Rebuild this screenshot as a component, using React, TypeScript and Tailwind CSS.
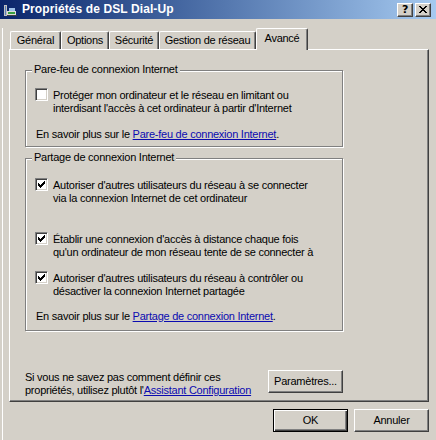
import React from "react";

const raised =
  "border border-t-white border-l-white border-r-[#404040] border-b-[#404040] shadow-[inset_-1px_-1px_0_#808080]";

function Check({ checked }: { checked?: boolean }) {
  return (
    <div className="w-[13px] h-[13px] shrink-0 bg-white border border-t-[#808080] border-l-[#808080] border-r-white border-b-white shadow-[inset_1px_1px_0_#404040,inset_-1px_-1px_0_#d4d0c8] relative">
      {checked && (
        <svg width="7" height="7" viewBox="0 0 7 7" className="absolute left-[2px] top-[2px]" shapeRendering="crispEdges">
          <path d="M0 2h1v3H0zM1 3h1v3H1zM2 4h1v3H2zM3 3h1v3H3zM4 2h1v3H4zM5 1h1v3H5zM6 0h1v3H6z" fill="#000" />
        </svg>
      )}
    </div>
  );
}

function Option({ checked, lines, className = "" }: { checked?: boolean; lines: string[]; className?: string }) {
  return (
    <div className={"flex items-start " + className}>
      <Check checked={checked} />
      <div className="ml-[5px] pt-[1px]">
        {lines.map((l) => (
          <div key={l} className="whitespace-nowrap">{l}</div>
        ))}
      </div>
    </div>
  );
}

function Group({ title, className = "", children }: { title: string; className?: string; children: React.ReactNode }) {
  return (
    <div
      className={
        "relative w-[318px] border border-[#808080] shadow-[inset_1px_1px_0_white,1px_1px_0_white] pl-[9px] " + className
      }
    >
      <div className="absolute left-[6px] -top-[8px] px-[2px] bg-[#d4d0c8] whitespace-nowrap">{title}</div>
      {children}
    </div>
  );
}

function Link({ children }: { children: React.ReactNode }) {
  return <span className="text-[#0b0bb0] underline">{children}</span>;
}

const tabs = [
  { label: "Général", w: "w-[51px]" },
  { label: "Options", w: "w-[48px]" },
  { label: "Sécurité", w: "w-[50px]" },
  { label: "Gestion de réseau", w: "w-[97px]" },
];

export default function App() {
  return (
    <div className="w-[436px] h-[440px] overflow-hidden bg-[#d4d0c8] text-[11px] leading-[13px] tracking-[-0.25px] text-black font-['Liberation_Sans',Arial,sans-serif]">
      {/* title bar */}
      <div className="h-[19px] flex items-center bg-linear-to-r from-[#0a246a] to-[#a6caf0] pl-[3px] pr-[5px]">
        <svg width="16" height="16" viewBox="0 0 16 16" shapeRendering="crispEdges">
          <rect x="1" y="3" width="3" height="11" fill="#c0c0c0" />
          <rect x="2" y="4" width="1" height="9" fill="#5a7fb8" />
          <path d="M4 9h9v4H4z" fill="#dcdcdc" />
          <path d="M5 10h7v2H5z" fill="#3aa040" />
          <path d="M4 13h10v1H4z" fill="#404040" />
          <path d="M6 6h6v3H6z" fill="#9dc0e8" />
        </svg>
        <span className="ml-[3px] text-white font-bold text-[12px] tracking-[0.1px]">Propriétés de DSL Dial-Up</span>
        <div className="ml-auto flex gap-[2px]">
          <div className={"w-[16px] h-[14px] bg-[#d4d0c8] flex items-center justify-center " + raised}>
            <span className="font-bold text-[11px] leading-none font-['DejaVu_Sans',sans-serif] -mt-[1px]">?</span>
          </div>
          <div className={"w-[16px] h-[14px] bg-[#d4d0c8] flex items-center justify-center " + raised}>
            <svg width="8" height="7" viewBox="0 0 8 7" shapeRendering="crispEdges">
              <path d="M0 0h2v1H0zM6 0h2v1H6zM1 1h2v1H1zM5 1h2v1H5zM2 2h4v1H2zM3 3h2v1H3zM2 4h4v1H2zM1 5h2v1H1zM5 5h2v1H5zM0 6h2v1H0zM6 6h2v1H6z" fill="#000" />
            </svg>
          </div>
        </div>
      </div>

      <div className="ml-[2px] border-l border-white pl-[6px] h-[421px]">
        {/* tabs */}
        <div className="flex items-end h-[21px] mt-[9px] pl-[1px]">
          {tabs.map((t) => (
            <div
              key={t.label}
              className={
                t.w +
                " h-[18px] flex items-center justify-center rounded-t-[2px] border-t border-l border-r border-t-white border-l-white border-r-[#404040] shadow-[inset_-1px_0_0_#808080] whitespace-nowrap"
              }
            >
              {t.label}
            </div>
          ))}
          <div className="w-[52px] h-[22px] -mb-[1px] relative z-10 bg-[#d4d0c8] flex items-start justify-center pt-[3px] rounded-t-[2px] border-t border-l border-r border-t-white border-l-white border-r-[#404040] shadow-[inset_-1px_0_0_#808080]">
            Avancé
          </div>
        </div>

        {/* panel */}
        <div className="w-[420px] h-[353px] border border-t-white border-l-white border-r-[#404040] border-b-[#404040] shadow-[inset_-1px_-1px_0_#808080] pl-[15px] pt-[20px]">
          <Group title="Pare-feu de connexion Internet" className="pt-[17px] pb-[5px]">
            <Option
              lines={[
                "Protéger mon ordinateur et le réseau en limitant ou",
                "interdisant l'accès à cet ordinateur à partir d'Internet",
              ]}
            />
            <div className="mt-[13px] ml-[1px] whitespace-nowrap">
              En savoir plus sur le <Link>Pare-feu de connexion Internet</Link>.
            </div>
          </Group>

          <Group title="Partage de connexion Internet" className="mt-[11px] pt-[19px] pb-[7px]">
            <Option
              checked
              lines={[
                "Autoriser d'autres utilisateurs du réseau à se connecter",
                "via la connexion Internet de cet ordinateur",
              ]}
            />
            <Option
              checked
              className="mt-[27px]"
              lines={[
                "Établir une connexion d'accès à distance chaque fois",
                "qu'un ordinateur de mon réseau tente de se connecter à",
              ]}
            />
            <Option
              checked
              className="mt-[12px]"
              lines={[
                "Autoriser d'autres utilisateurs du réseau à contrôler ou",
                "désactiver la connexion Internet partagée",
              ]}
            />
            <div className="mt-[12px] ml-[1px] whitespace-nowrap">
              En savoir plus sur le <Link>Partage de connexion Internet</Link>.
            </div>
          </Group>

          <div className="w-[318px] mt-[39px] flex items-start justify-between">
            <div className="whitespace-nowrap pt-[1px]">
              <div>Si vous ne savez pas comment définir ces</div>
              <div>
                propriétés, utilisez plutôt l'<Link>Assistant Configuration</Link>
              </div>
            </div>
            <button className={"w-[75px] h-[23px] bg-[#d4d0c8] flex items-center justify-center " + raised}>
              Paramètres...
            </button>
          </div>
        </div>

        {/* dialog buttons */}
        <div className="w-[420px] mt-[7px] flex justify-end gap-[6px]">
          <button className="w-[75px] h-[23px] bg-[#d4d0c8] flex items-center justify-center border border-black shadow-[inset_1px_1px_0_white,inset_-1px_-1px_0_#404040,inset_-2px_-2px_0_#808080]">
            OK
          </button>
          <button className={"w-[75px] h-[23px] bg-[#d4d0c8] flex items-center justify-center " + raised}>
            Annuler
          </button>
        </div>
      </div>
    </div>
  );
}
